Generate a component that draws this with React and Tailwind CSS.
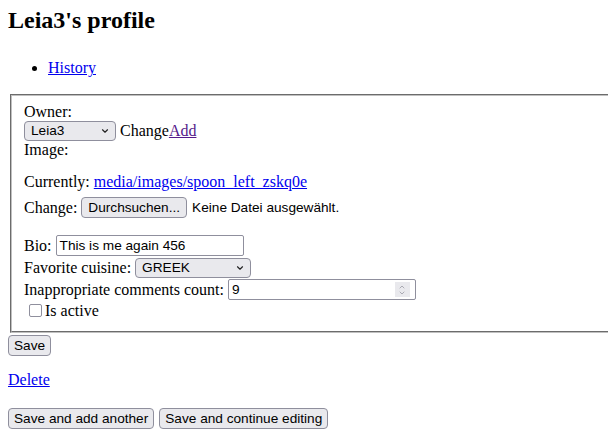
import { ChevronDown, ChevronUp } from "lucide-react";

const ctrl = "font-['Liberation_Sans',Arial,sans-serif] text-[13.65px] text-black";
const btn = `${ctrl} h-[21px] px-[5px] bg-[#e9e9ed] border border-[#8f8f9d] rounded-[4px] flex items-center leading-none`;

function FakeSelect({ value, width }) {
  return (
    <div
      className={`${ctrl} h-[20px] ${width} bg-[#e9e9ed] border border-[#8f8f9d] rounded-[4px] flex items-center justify-between pl-[6px] pr-[5px]`}
    >
      <span>{value}</span>
      <ChevronDown size={10} strokeWidth={2.75} className="text-[#222]" />
    </div>
  );
}

function TextInput({ value, width, spinner }) {
  return (
    <div
      className={`${ctrl} h-[21px] ${width} bg-white border border-[#8f8f9d] rounded-[2px] flex items-center justify-between pl-[3px] pr-[5px]`}
    >
      <span>{value}</span>
      {spinner && (
        <div className="w-[15px] h-[15px] bg-[#e9e9ed] flex flex-col items-center justify-center text-[#8a8a96]">
          <ChevronUp size={8} strokeWidth={2} className="-mb-[1px]" />
          <ChevronDown size={8} strokeWidth={2} className="-mt-[1px]" />
        </div>
      )}
    </div>
  );
}

export default function App() {
  return (
    <div className="w-[608px] h-[438px] overflow-hidden bg-white text-black font-['Liberation_Serif','Times_New_Roman',serif] text-base">
      <h2 className="pt-[6px] pl-[8px] text-2xl font-bold leading-[28px]">Leia3's profile</h2>

      <ul className="mt-[25px] ml-[48px] list-disc leading-[18px]">
        <li>
          <a href="#" className="text-[#0000ee] underline">
            History
          </a>
        </li>
      </ul>

      <form className="mt-[17px]">
        <fieldset className="ml-[10px] w-[640px] border-2 [border-style:groove] border-[#c0c0c0] pt-[6px] px-[12px] pb-[10px] leading-[18px]">
          <div className="h-[19px] leading-[19px]">Owner:</div>
          <div className="h-[20px] flex items-center">
            <FakeSelect value="Leia3" width="w-[92px]" />
            <span className="ml-[4px]">Change</span>
            <a href="#" className="text-[#551a8b] underline">
              Add
            </a>
          </div>
          <div className="h-[18px]">Image:</div>
          <div className="h-[14px]" />
          <div className="h-[18px]">
            Currently:{" "}
            <a href="#" className="text-[#0000ee] underline">
              media/images/spoon_left_zskq0e
            </a>
          </div>
          <div className="mt-[6px] h-[21px] flex items-center">
            <span>Change:</span>
            <button type="button" className={`${btn} ml-[4px] px-[6px]`}>
              Durchsuchen...
            </button>
            <span className={`${ctrl} ml-[5px]`}>Keine Datei ausgewählt.</span>
          </div>

          <div className="mt-[17px] h-[21px] flex items-center">
            <span>Bio:</span>
            <div className="ml-[4px]">
              <TextInput value="This is me again 456" width="w-[188px]" />
            </div>
          </div>
          <div className="mt-[1px] h-[21px] flex items-center">
            <span>Favorite cuisine:</span>
            <div className="ml-[4px]">
              <FakeSelect value="GREEK" width="w-[116px]" />
            </div>
          </div>
          <div className="mt-[1px] h-[21px] flex items-center">
            <span>Inappropriate comments count:</span>
            <div className="ml-[4px]">
              <TextInput value="9" width="w-[188px]" spinner />
            </div>
          </div>
          <div className="h-[21px] flex items-center">
            <span className="ml-[5px] mr-[3px] w-[13px] h-[13px] border border-[#8f8f9d] rounded-[2px] bg-white" />
            <span>Is active</span>
          </div>
        </fieldset>

        <div className="mt-[2px] pl-[8px]">
          <button type="submit" className={btn}>
            Save
          </button>
        </div>
      </form>

      <div className="mt-[15px] pl-[8px] leading-[18px]">
        <a href="#" className="text-[#0000ee] underline">
          Delete
        </a>
      </div>

      <div className="mt-[19px] pl-[8px] flex gap-[5px]">
        <button type="button" className={btn}>
          Save and add another
        </button>
        <button type="button" className={btn}>
          Save and continue editing
        </button>
      </div>
    </div>
  );
}
